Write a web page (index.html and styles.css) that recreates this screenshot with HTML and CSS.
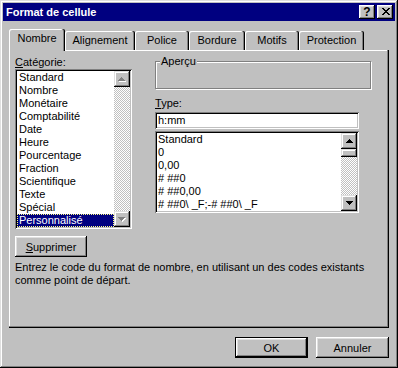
FILE: index.html
```html
<!DOCTYPE html>
<html lang="fr">
<head>
    <meta charset="UTF-8">
    <title>Format de cellule</title>
    <link rel="stylesheet" href="styles.css">
</head>
<body>
    <div class="dialog">
        <div class="caption">
            <span class="caption-title">Format de cellule</span>
            <div class="caption-buttons">
                <button class="caption-btn help">?</button>
                <button class="caption-btn close">
                    <svg width="8" height="7" viewBox="0 0 8 7" shape-rendering="crispEdges">
                        <path d="M0 0h2v1h-2zM6 0h2v1h-2zM1 1h2v1h-2zM5 1h2v1h-2zM2 2h4v1h-4zM3 3h2v1h-2zM2 4h4v1h-4zM1 5h2v1h-2zM5 5h2v1h-2zM0 6h2v1h-2zM6 6h2v1h-2z" fill="#000"/>
                    </svg>
                </button>
            </div>
        </div>

        <div class="dialog-body">
            <!-- Tabs -->
            <div class="tabs">
                <div class="tab tab-nombre active">Nombre</div>
                <div class="tab tab-alignement">Alignement</div>
                <div class="tab tab-police">Police</div>
                <div class="tab tab-bordure">Bordure</div>
                <div class="tab tab-motifs">Motifs</div>
                <div class="tab tab-protection">Protection</div>
            </div>

            <div class="panel">
                <div class="panel-grid">
                    <!-- Category list -->
                    <div class="col-left">
                        <div class="label label-category"><u>C</u>atégorie:</div>
                        <div class="listbox listbox-category">
                            <ul class="list-items">
                                <li>Standard</li>
                                <li>Nombre</li>
                                <li>Monétaire</li>
                                <li>Comptabilité</li>
                                <li>Date</li>
                                <li>Heure</li>
                                <li>Pourcentage</li>
                                <li>Fraction</li>
                                <li>Scientifique</li>
                                <li>Texte</li>
                                <li>Spécial</li>
                                <li class="selected"><span class="focus">Personnalisé</span></li>
                            </ul>
                            <div class="scrollbar disabled">
                                <div class="scroll-btn">
                                    <svg class="arrow" width="8" height="5" viewBox="0 0 8 5" shape-rendering="crispEdges">
                                        <path d="M4 1h1v1h-1zM3 2h3v1h-3zM2 3h5v1h-5zM1 4h7v1h-7z" fill="#fff"/>
                                        <path d="M3 0h1v1h-1zM2 1h3v1h-3zM1 2h5v1h-5zM0 3h7v1h-7z" fill="#808080"/>
                                    </svg>
                                </div>
                                <div class="scroll-track"></div>
                                <div class="scroll-btn">
                                    <svg class="arrow" width="8" height="5" viewBox="0 0 8 5" shape-rendering="crispEdges">
                                        <path d="M1 1h7v1h-7zM2 2h5v1h-5zM3 3h3v1h-3zM4 4h1v1h-1z" fill="#fff"/>
                                        <path d="M0 0h7v1h-7zM1 1h5v1h-5zM2 2h3v1h-3zM3 3h1v1h-1z" fill="#808080"/>
                                    </svg>
                                </div>
                            </div>
                        </div>
                    </div>

                    <!-- Preview and type -->
                    <div class="col-right">
                        <fieldset class="groupbox">
                            <legend>Aperçu</legend>
                            <div class="preview"></div>
                        </fieldset>
                        <div class="label label-type"><u>T</u>ype:</div>
                        <div class="textbox">h:mm</div>
                        <div class="listbox listbox-type">
                            <ul class="list-items">
                                <li>Standard</li>
                                <li>0</li>
                                <li>0,00</li>
                                <li># ##0</li>
                                <li># ##0,00</li>
                                <li># ##0\ _F;-# ##0\ _F</li>
                            </ul>
                            <div class="scrollbar">
                                <div class="scroll-btn">
                                    <svg class="arrow" width="7" height="4" viewBox="0 0 7 4" shape-rendering="crispEdges">
                                        <path d="M3 0h1v1h-1zM2 1h3v1h-3zM1 2h5v1h-5zM0 3h7v1h-7z" fill="#000"/>
                                    </svg>
                                </div>
                                <div class="scroll-thumb"></div>
                                <div class="scroll-track"></div>
                                <div class="scroll-btn">
                                    <svg class="arrow" width="7" height="4" viewBox="0 0 7 4" shape-rendering="crispEdges">
                                        <path d="M0 0h7v1h-7zM1 1h5v1h-5zM2 2h3v1h-3zM3 3h1v1h-1z" fill="#000"/>
                                    </svg>
                                </div>
                            </div>
                        </div>
                    </div>
                </div>

                <button class="btn btn-delete"><u>S</u>upprimer</button>
                <p class="hint">Entrez le code du format de nombre, en utilisant un des codes existants<br>comme point de départ.</p>
            </div>

            <div class="footer">
                <button class="btn btn-default">OK</button>
                <button class="btn">Annuler</button>
            </div>
        </div>
    </div>
</body>
</html>
```

FILE: styles.css
```css
/* Windows 95 style dialog */
* {
    box-sizing: border-box;
}

body {
    margin: 0;
    background: #c0c0c0;
    font-family: "Liberation Sans", Arial, sans-serif;
    font-size: 11px;
    line-height: 13px;
    color: #000;
}

.dialog {
    width: 398px;
    height: 368px;
    padding: 3px;
    background: #c0c0c0;
    box-shadow: inset -1px -1px #000, inset 1px 1px #dfdfdf, inset -2px -2px #808080, inset 2px 2px #fff;
}

/* Title bar */
.caption {
    height: 18px;
    background: #000080;
    display: flex;
    align-items: center;
    justify-content: space-between;
    padding: 0 2px 0 3px;
}

.caption-title {
    color: #fff;
    font-weight: bold;
    font-size: 11px;
}

.caption-buttons {
    display: flex;
    gap: 2px;
}

.caption-btn {
    width: 16px;
    height: 14px;
    padding: 0;
    border: none;
    background: #c0c0c0;
    box-shadow: inset -1px -1px #000, inset 1px 1px #fff, inset -2px -2px #808080, inset 2px 2px #dfdfdf;
    display: flex;
    align-items: center;
    justify-content: center;
    font-family: "Liberation Sans", Arial, sans-serif;
}

.caption-btn.help {
    font-weight: bold;
    font-size: 12px;
    line-height: 12px;
    padding-bottom: 1px;
}

.caption-btn svg {
    display: block;
    margin: 0 0 1px 1px;
}

.dialog-body {
    padding: 8px 6px 0;
}

/* Tabs */
.tabs {
    display: flex;
    align-items: flex-end;
}

.tab {
    height: 19px;
    line-height: 18px;
    text-align: center;
    border-radius: 2px 2px 0 0;
    box-shadow: inset -1px 0 #000, inset -2px 0 #808080, inset 1px 1px #fff;
}

.tab.active {
    height: 22px;
    margin-bottom: -1px;
    padding-bottom: 3px;
    position: relative;
    z-index: 1;
    background: #c0c0c0;
}

.tab-nombre { width: 56px; }
.tab-alignement { width: 70px; }
.tab-police { width: 54px; }
.tab-bordure { width: 56px; }
.tab-motifs { width: 54px; }
.tab-protection { width: 65px; }

.panel {
    height: 278px;
    padding: 5px 6px;
    box-shadow: inset -1px -1px #000, inset -2px -2px #808080, inset 1px 1px #fff;
}

.panel-grid {
    display: grid;
    grid-template-columns: 117px 216px;
    column-gap: 23px;
    align-items: start;
}

.label {
    height: 13px;
}

.label-category {
    margin-top: 1px;
}

/* Lists */
.listbox {
    display: flex;
    padding: 2px;
    background: #fff;
    box-shadow: inset 1px 1px #808080, inset -1px -1px #fff, inset 2px 2px #000, inset -2px -2px #c0c0c0;
}

.listbox-category {
    height: 160px;
}

.listbox-type {
    width: 204px;
    height: 82px;
    margin-top: 2px;
}

.list-items {
    flex: 1;
    list-style: none;
    margin: 0;
    padding: 0;
    overflow: hidden;
}

.list-items li {
    height: 13px;
    padding-left: 1px;
    white-space: nowrap;
}

.listbox-category .list-items li {
    padding-left: 2px;
}

.list-items li.selected {
    background: #000080;
    color: #fff;
    padding-left: 0;
    outline: 1px dotted #ffff80;
    outline-offset: -1px;
}

.list-items li.selected .focus {
    padding-left: 2px;
}

.scrollbar {
    width: 16px;
    display: flex;
    flex-direction: column;
}

.scroll-btn,
.scroll-thumb {
    background: #c0c0c0;
    box-shadow: inset -1px -1px #000, inset 1px 1px #dfdfdf, inset -2px -2px #808080, inset 2px 2px #fff;
}

.scroll-btn {
    height: 16px;
    display: flex;
    align-items: center;
    justify-content: center;
}

.scroll-btn .arrow {
    display: block;
}

.scroll-thumb {
    height: 8px;
}

.scroll-track {
    flex: 1;
    background: repeating-conic-gradient(#c0c0c0 0 25%, #fff 0 50%) 0 0 / 2px 2px;
}

/* Right column */
.groupbox {
    margin: 0;
    padding: 0;
    border: 1px solid #808080;
    box-shadow: inset 1px 1px #fff, 1px 1px #fff;
}

.groupbox legend {
    margin-left: 4px;
    padding: 0 1px;
    line-height: 13px;
    background: #c0c0c0;
}

.preview {
    height: 20px;
}

.label-type {
    margin-top: 8px;
}

.textbox {
    width: 204px;
    height: 17px;
    margin-top: 2px;
    padding: 2px 3px;
    background: #fff;
    box-shadow: inset 1px 1px #808080, inset -1px -1px #fff, inset 2px 2px #000, inset -2px -2px #c0c0c0;
}

/* Buttons */
.btn {
    height: 21px;
    padding: 0;
    border: none;
    background: #c0c0c0;
    font-family: inherit;
    font-size: 11px;
    color: #000;
    box-shadow: inset -1px -1px #000, inset 1px 1px #fff, inset -2px -2px #808080, inset 2px 2px #dfdfdf;
}

.btn-delete {
    display: block;
    width: 72px;
    margin-top: 7px;
}

.hint {
    margin: 4px 0 0;
}

.footer {
    display: flex;
    justify-content: flex-end;
    gap: 8px;
    margin-top: 9px;
}

.footer .btn {
    width: 73px;
}

.btn-default {
    border: 1px solid #000;
}
```
